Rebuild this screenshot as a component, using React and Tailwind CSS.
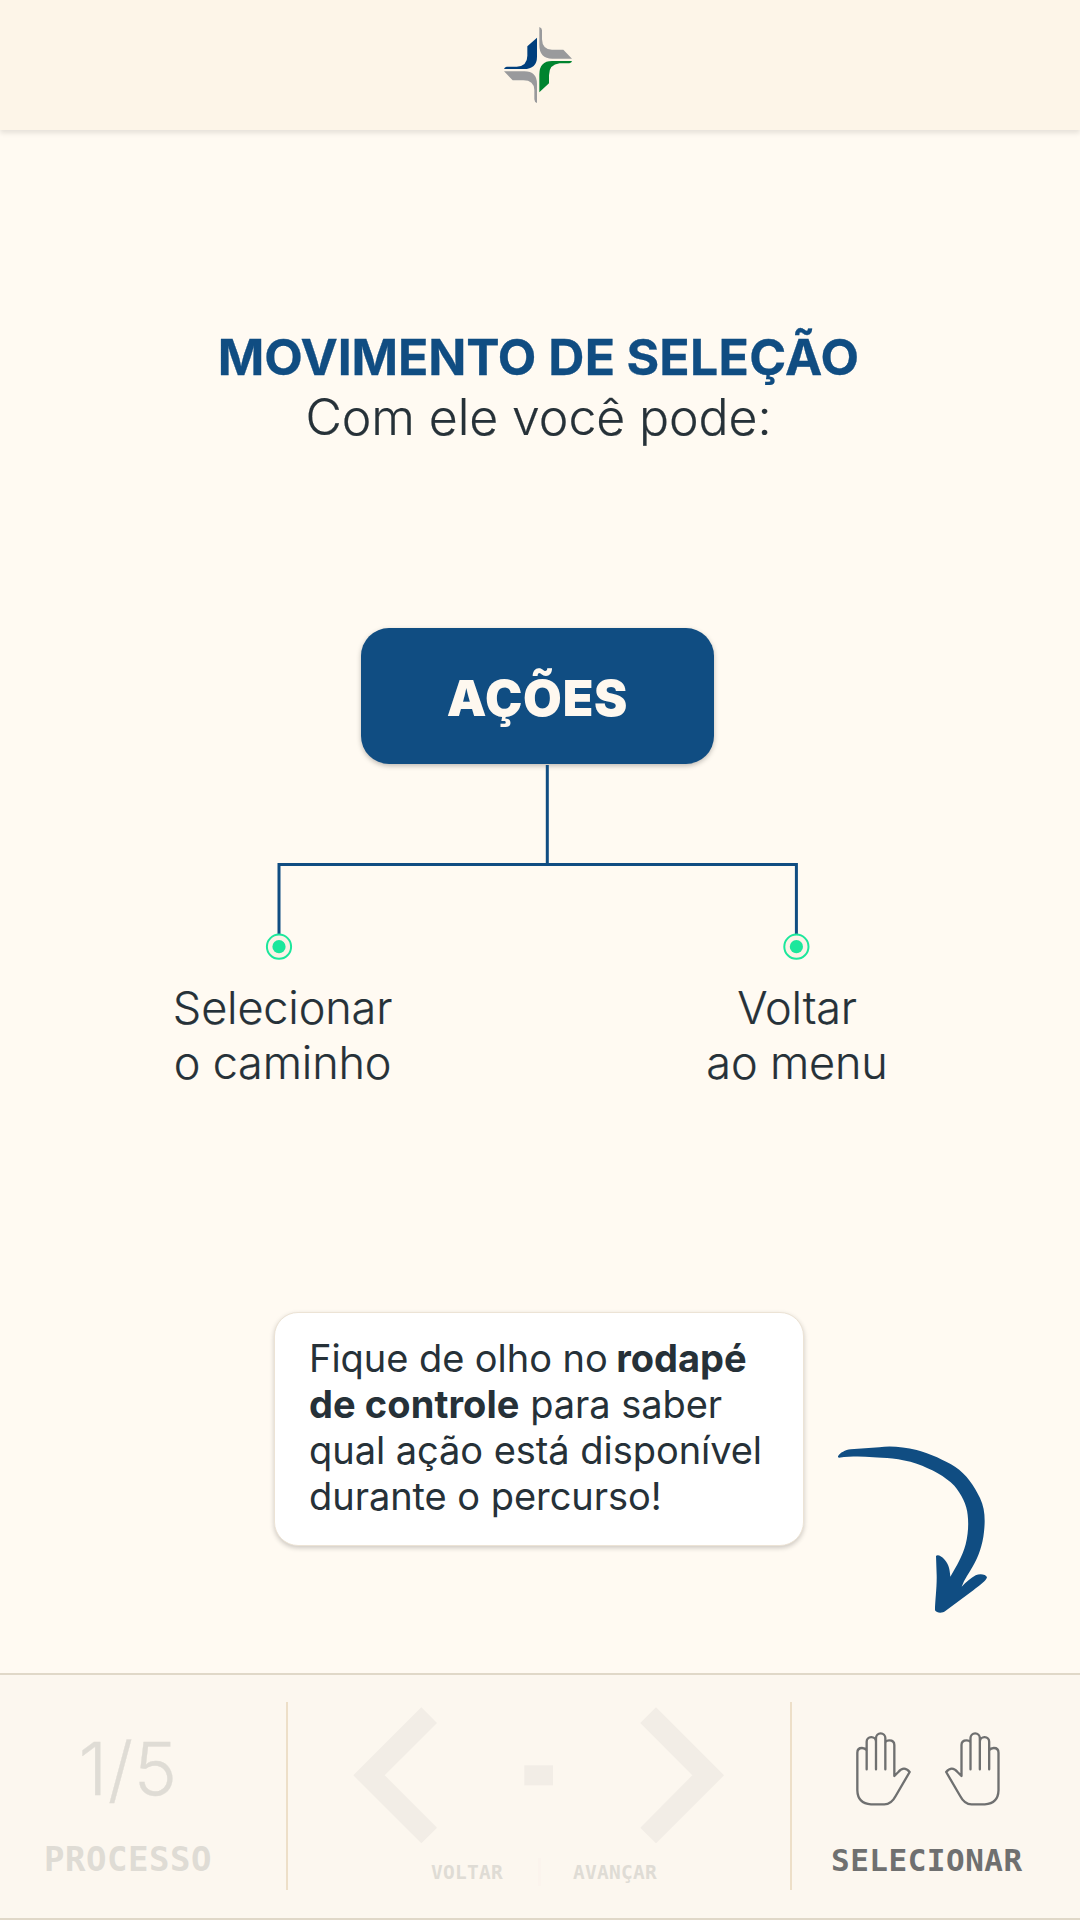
const HAND =
  'M79 163V81a14 14 0 0 1 28-1M107 163V69a14 14 0 0 1 28 0V163M135 82Q138 76 147 76Q162 76 162 90V183L174 171Q191 151 208 171L166 243Q153 268 132 268H92Q52 266 51 226V113Q51 99 65 99Q74 99 79 106';

function Logo() {
  return (
    <svg className="h-[76px] w-[68px]" viewBox="72 51 204 228">
      <path fill="#003f7d" d="M171 83V140Q171 177 131 177H72Q74 171 80 170H110Q142 168 142 137V109Z" />
      <path fill="#999a9c" d="M178 51Q186 53 186 61V88Q187 119 216 119H250L276 146H217Q178 146 178 105Z" />
      <path fill="#999a9c" d="M72 184H133Q171 184 171 222V279Q163 276 163 268V240Q162 211 130 211H98Z" />
      <path fill="#00842f" d="M178 247V194Q178 153 216 153H276Q275 159 268 160H239Q207 163 207 196V220Z" />
    </svg>
  );
}

function Connector() {
  return (
    <svg className="ml-[264px] block h-[196px] w-[548px]" viewBox="264 765 548 196">
      <g fill="none" stroke="#104d82" strokeWidth="3">
        <path d="M547.3 765V864.5M279 934V864.5H796.4V934" />
      </g>
      {[279, 796.4].map((cx) => (
        <g key={cx}>
          <circle cx={cx} cy="946.7" r="12.1" fill="#fdf2e7" stroke="#1ce79c" strokeWidth="2" />
          <circle cx={cx} cy="946.7" r="6.6" fill="#1ce79c" />
        </g>
      ))}
    </svg>
  );
}

function Arrow() {
  return (
    <svg className="block h-[210px] w-[190px]" viewBox="0 0 570 630">
      <path
        fill="#104d82"
        d="M54 109C60 98 76 90 92 88C120 86 150 84 178 82C210 77 250 81 290 90C330 100 375 122 405 140C440 163 462 197 480 234C495 265 496 300 492 335C488 375 475 410 459 438C447 460 433 478 425 500C438 487 453 474 467 466C480 460 498 463 501 472C499 482 480 495 460 511L376 573C368 580 350 580 345 571C345 545 351 500 350 465L348 408C352 402 364 407 374 419C388 435 389 450 391 470C410 438 427 410 437 373C445 340 446 310 443 285C441 255 424 222 403 197C376 169 335 147 290 131C240 115 190 113 160 112C125 109 95 109 57 113Q53 112 54 109Z"
      />
    </svg>
  );
}

function Hands() {
  return (
    <svg className="block h-[76px] w-[145px]" viewBox="47 48 435 228">
      <g fill="none" stroke="#6f7070" strokeWidth="7" strokeLinecap="round" strokeLinejoin="round">
        <path d={HAND} />
        <path d={HAND} transform="translate(525.5 0) scale(-1 1)" />
      </g>
    </svg>
  );
}

function Chevrons() {
  return (
    <svg className="ml-[65px] block h-[137px] w-[372px]" viewBox="69 142 1116 411" fill="#f2ede6">
      <path d="M274 143L321 190L164 347L321 504L274 551L70 347Z" />
      <path d="M583 317H669V377H583Z" />
      <path d="M978 143L931 190L1087 347L931 504L978 551L1182 347Z" />
    </svg>
  );
}

export default function App() {
  return (
    <div className="flex h-[1920px] w-[1080px] flex-col overflow-hidden bg-[#fffaf2] font-['Inter',sans-serif] text-[#263138]">
      <header className="flex h-[130px] shrink-0 justify-center bg-[#fdf5e8] pt-[27px] pr-1 shadow-[0_3px_5px_rgba(0,0,0,0.1)]">
        <Logo />
      </header>

      <main className="flex h-[1543px] shrink-0 flex-col">
        <div className="mt-[197px] flex h-[120px] flex-col items-center pr-[3px] text-[50px] leading-[60px] whitespace-nowrap">
          <h1 className="font-bold tracking-[0.25px] text-[#104d82] [-webkit-text-stroke:0.3px]">
            <span className="tracking-[-0.15px]">MOVIMENTO</span> <span className="[word-spacing:-1px]">DE SELEÇÃO</span>
          </h1>
          <p className="font-light tracking-[-0.1px] [-webkit-text-stroke:0.2px]">Com ele você pode:</p>
        </div>

        <div className="mt-[181px] ml-[361px] flex h-[136px] w-[353px] items-center justify-center rounded-[28px] bg-[#104d82] pt-[4px] text-[50px] font-black tracking-[0.8px] text-[#fef8ef] shadow-[0_2px_5px_rgba(0,0,0,0.25)]">
          AÇÕES
        </div>
        <div className="mt-px">
          <Connector />
        </div>
        <div className="mt-[19px] ml-[133px] flex h-[110px] gap-[214px] text-center text-[45px] leading-[55px] font-light tracking-[-0.15px] whitespace-nowrap [-webkit-text-stroke:0.2px]">
          <p className="w-[299px]">Selecionar<br />o caminho</p>
          <p className="w-[302px]">Voltar<br />ao menu</p>
        </div>

        <div className="mt-[222px] ml-[274px] flex items-start">
          <div className="h-[234px] w-[530px] shrink-0 rounded-[24px] border border-[#ece3d5] bg-white pt-[22px] pl-[34px] text-[38px] leading-[46px] tracking-[-0.05px] whitespace-nowrap shadow-[0_2px_5px_rgba(0,0,0,0.2)]">
            <p>Fique de olho no <b className="-ml-[2px]">rodapé</b></p>
            <p><b className="tracking-[0.08px]">de controle</b> para saber</p>
            <p>qual ação está disponível</p>
            <p>durante o percurso!</p>
          </div>
          <div className="mt-[108px] ml-4">
            <Arrow />
          </div>
        </div>
      </main>

      <footer className="flex h-[247px] shrink-0 border-y-2 border-[#e0d8c8] bg-[#fcf7ef] font-['DejaVu_Sans_Mono',monospace] font-bold">
        <section className="flex w-[286px] flex-col items-center pr-[30px] text-[#dfdcd5]">
          <div className="mt-[50px] font-['Inter',sans-serif] text-[73px] leading-[88px] font-light tracking-[0.5px] [-webkit-text-stroke:0.3px]">1/5</div>
          <div className="mt-[22px] text-[34px] leading-[48px] tracking-[0.5px]">PROCESSO</div>
        </section>
        <div className="mt-[27px] h-[188px] w-0.5 bg-[#eddfc8]" />
        <section className="w-[502px] pt-8">
          <Chevrons />
          <div className="mt-3.5 ml-[143px] flex h-[28px] items-center text-[19.5px] tracking-[0.25px] text-[#dfdcd5]">
            <span className="w-[107px] pt-px">VOLTAR</span>
            <span className="h-[28px] w-[3px] bg-[#fbf4ed]" />
            <span className="ml-8 pt-px">AVANÇAR</span>
          </div>
        </section>
        <div className="mt-[27px] h-[188px] w-0.5 bg-[#eddfc8]" />
        <section className="flex w-[288px] flex-col items-start text-[#6f7070]">
          <div className="mt-14 ml-[63.5px]">
            <Hands />
          </div>
          <div className="mt-[29px] ml-[39px] text-[31px] leading-[48px] tracking-[0.5px]">SELECIONAR</div>
        </section>
      </footer>
    </div>
  );
}
